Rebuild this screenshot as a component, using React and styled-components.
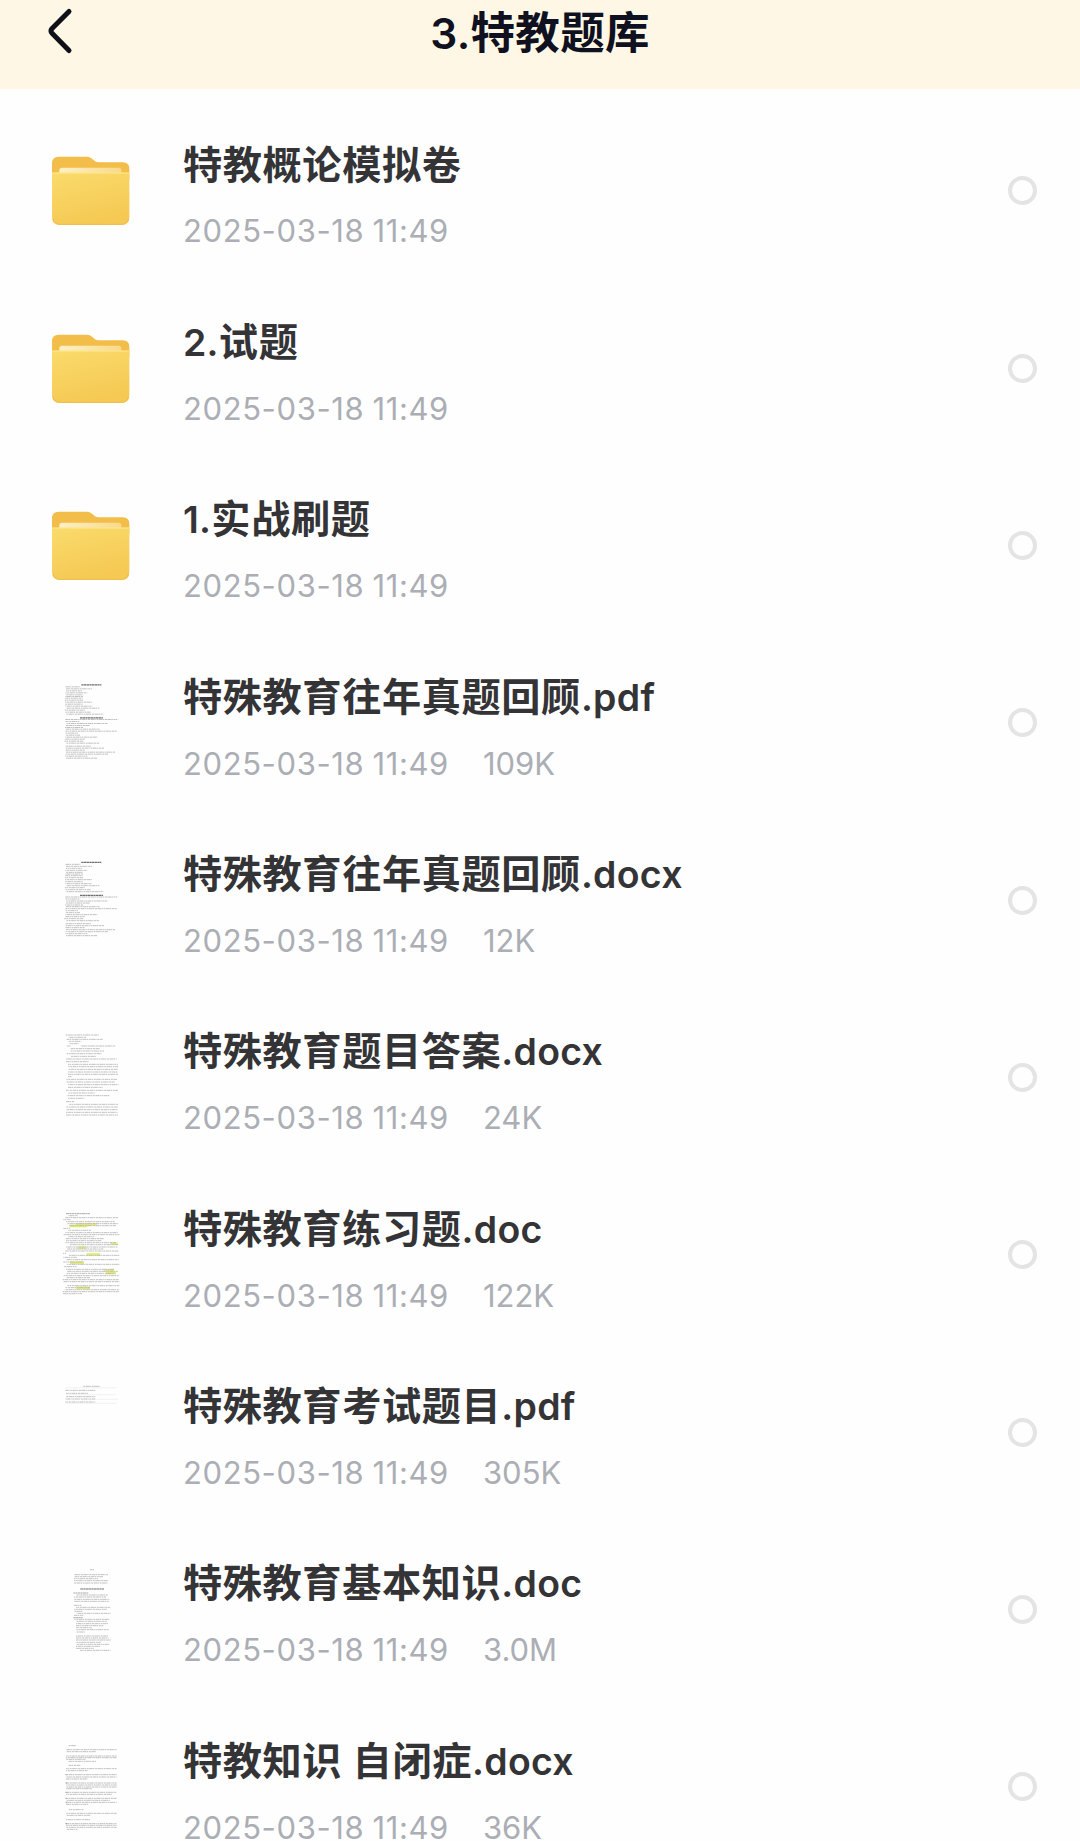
import React from 'react';
import styled, { createGlobalStyle } from 'styled-components';

const GlobalStyle = createGlobalStyle`
  * {
    box-sizing: border-box;
  }

  body {
    margin: 0;
    background: #fefefe;
    font-family: Inter, 'Noto Sans CJK SC', sans-serif;
  }
`;

const StyledPage = styled.div`
  height: 100vh;
  overflow: hidden;
`;

const StyledHeader = styled.header`
  display: grid;
  grid-template-columns: 120px 1fr 120px;
  align-items: start;
  height: 89px;
  background: #fef7e5;
`;

const StyledBack = styled.button`
  display: flex;
  padding: 7px 0 0 46px;
  border: none;
  background: none;
`;

const StyledHeading = styled.h1`
  margin: 0;
  padding-top: 3px;
  font-size: 44.5px;
  font-weight: 600;
  line-height: 60px;
  text-align: center;
  letter-spacing: 0.3px;
  color: #0f1020;
`;

const StyledLatin = styled.span`
  font-size: 0.955em;
  letter-spacing: 0.3px;
`;

const StyledList = styled.ul`
  margin: 0;
  padding: 13px 0 0;
  list-style: none;
`;

const StyledRow = styled.li`
  display: flex;
  align-items: center;
  height: 177.35px;
  padding: 0 43px 0 50px;
`;

const StyledPreview = styled.div`
  display: flex;
  flex: none;
  width: 133px;
  padding-left: ${({ $inset }) => $inset || '0'};
`;

const StyledInfo = styled.div`
  flex: 1;
  display: flex;
  flex-direction: column;
  row-gap: 21px;
  padding-top: 10px;
`;

const StyledName = styled.div`
  font-size: 39.2px;
  font-weight: 600;
  line-height: 50px;
  letter-spacing: 0.6px;
  white-space: pre;
  color: #343436;
`;

const StyledMeta = styled.div`
  display: flex;
  column-gap: 34px;
  font-size: 31px;
  line-height: 40px;
  letter-spacing: 0.6px;
  word-spacing: -1px;
  color: #abaeb4;
`;

const StyledSize = styled.span`
  letter-spacing: 0;
`;

const StyledRadio = styled.span`
  flex: none;
  width: 29px;
  height: 29px;
  border: 4px solid #e4e4e4;
  border-radius: 50%;
`;

// each line: [y, x1, x2, kind]
const DOCS = {
  review: {
    top: 22.5,
    lines: [
      [43, 94, 154, 'title'], [49, 45, 92], [55, 48, 126], [61, 48, 96], [67, 46, 112], [73, 48, 99],
      [78, 46, 100], [83, 46, 98], [89, 45, 99], [95, 45, 126], [101, 45, 99], [107, 46, 126],
      [113, 50, 148], [119, 45, 104], [125, 46, 122], [131, 48, 160],
      [142, 90, 159, 'title'], [147, 46, 202], [153, 46, 88], [159, 48, 172], [165, 46, 120],
      [171, 45, 100], [176, 48, 150], [182, 46, 200], [188, 46, 84], [194, 46, 90], [200, 46, 142],
      [206, 46, 104], [212, 43, 100], [218, 48, 147], [227, 45, 124], [233, 47, 162], [239, 46, 104],
      [245, 48, 196], [251, 46, 174], [257, 46, 112], [263, 48, 142]
    ]
  },
  answers: {
    top: 23,
    lines: [
      [31, 47, 146], [38, 56, 108], [44, 50, 158], [50, 56, 94], [57, 58, 85], [64, 50, 62],
      [64, 92, 196], [72, 62, 150], [79, 62, 162], [87, 50, 154], [95, 62, 138], [103, 48, 200],
      [111, 48, 117], [119, 54, 204], [126, 54, 204], [134, 54, 204], [142, 54, 204], [149, 54, 204],
      [156, 54, 64], [164, 48, 202], [172, 48, 194], [180, 54, 206], [188, 54, 158], [197, 48, 204],
      [205, 54, 134], [213, 50, 180], [221, 54, 104], [231, 48, 74], [239, 58, 204], [247, 48, 204],
      [255, 48, 202], [263, 48, 202], [271, 48, 204]
    ]
  },
  practice: {
    top: 16,
    marks: [[72, 76, 140], [77, 58, 112], [130, 182, 203], [142, 85, 106], [162, 110, 150], [187, 60, 102], [210, 163, 192], [218, 168, 198], [262, 78, 120]],
    lines: [
      [40, 48, 120, 'dark'], [46, 55, 84], [52, 46, 204], [58, 40, 62], [64, 48, 194], [70, 52, 206],
      [76, 58, 198], [84, 40, 60], [90, 55, 124], [97, 46, 204], [103, 40, 208], [109, 55, 132],
      [115, 48, 162], [121, 48, 154], [127, 46, 198], [133, 58, 204], [140, 48, 202], [146, 52, 160],
      [152, 46, 206], [159, 38, 48], [165, 55, 208], [171, 40, 80], [178, 50, 206], [185, 40, 100],
      [192, 50, 208], [199, 40, 80], [207, 48, 192], [213, 52, 204], [219, 50, 194], [226, 40, 206],
      [232, 48, 120], [238, 38, 206], [244, 40, 208], [256, 52, 208], [262, 46, 120], [268, 44, 206],
      [274, 38, 206], [280, 38, 96]
    ]
  },
  exam: {
    top: 9,
    lines: [
      [34, 100, 149], [38, 46, 200, 'faint'], [46, 46, 137], [55, 48, 114], [59, 46, 196, 'faint'],
      [65, 48, 136], [72, 46, 136], [73, 140, 204, 'faint'], [81, 46, 136], [85, 46, 200, 'faint']
    ]
  },
  basics: {
    top: 32,
    lines: [
      [30, 120, 132], [45, 72, 174], [51, 74, 160], [57, 72, 144], [63, 72, 174], [70, 72, 174],
      [88, 90, 162, 'title'], [100, 70, 116, 'dark'], [106, 80, 174], [112, 72, 168], [119, 72, 178],
      [125, 72, 178], [137, 72, 94], [143, 78, 180], [149, 72, 170], [155, 72, 98], [161, 80, 182],
      [167, 72, 100], [174, 70, 98, 'dark'], [179, 72, 178], [185, 78, 170], [192, 78, 174],
      [198, 78, 160], [204, 78, 126], [210, 78, 176], [217, 78, 104], [229, 78, 174], [235, 78, 176],
      [241, 78, 182], [248, 78, 152], [254, 78, 178], [260, 78, 150], [266, 78, 132], [272, 90, 182]
    ]
  },
  autism: {
    top: 25,
    lines: [
      [31, 56, 78], [43, 48, 200], [49, 50, 138], [62, 48, 200], [67, 48, 200], [72, 48, 108],
      [78, 54, 138], [90, 56, 92], [100, 48, 200], [106, 48, 114], [118, 48, 200],
      [125, 48, 200], [131, 48, 112], [143, 48, 200], [149, 48, 200], [155, 48, 200],
      [160, 48, 126], [171, 48, 200], [177, 48, 186], [189, 48, 200], [195, 48, 180],
      [201, 48, 200], [207, 48, 116], [223, 56, 100], [234, 48, 200], [240, 48, 122],
      [253, 48, 120], [265, 48, 200], [270, 48, 200], [276, 48, 200], [282, 48, 84],
      [118, 46, 52, 'dark'], [143, 46, 52, 'dark'], [171, 46, 52, 'dark'], [189, 46, 52, 'dark'],
      [201, 46, 52, 'dark'], [265, 46, 52, 'dark']
    ]
  }
};

const STROKES = {
  title: { stroke: '#707070', strokeWidth: 3.4, strokeDasharray: '7 1' },
  dark: { stroke: '#969696', strokeWidth: 2.4, strokeDasharray: '9 1 5 1' },
  faint: { stroke: '#ececec', strokeWidth: 2 },
  text: { stroke: '#b0b0b0', strokeWidth: 2.4, strokeDasharray: '6 1.5 11 1 4 2' }
};

const files = [
  { name: '特教概论模拟卷' },
  { name: '2.试题' },
  { name: '1.实战刷题' },
  { name: '特殊教育往年真题回顾.pdf', size: '109K', doc: 'review' },
  { name: '特殊教育往年真题回顾.docx', size: '12K', doc: 'review', shift: 1.5 },
  { name: '特殊教育题目答案.docx', size: '24K', doc: 'answers' },
  { name: '特殊教育练习题.doc', size: '122K', doc: 'practice' },
  { name: '特殊教育考试题目.pdf', size: '305K', doc: 'exam' },
  { name: '特殊教育基本知识.doc', size: '3.0M', doc: 'basics' },
  { name: '特教知识 自闭症.docx', size: '36K', doc: 'autism' }
];

// latin runs are set a little smaller than the hanzi around them
const MixedText = ({ text }) => text.split(/([\w.]+)/).filter(Boolean).map((part, i) => (
  /^[\w.]/.test(part) ? <StyledLatin key={i}>{part}</StyledLatin> : part
));

const FolderIcon = () => (
  <svg width="77.4" height="69" viewBox="0 0 232 207">
    <defs>
      <linearGradient id="folderFront" x1="0" y1="0" x2="0.35" y2="1">
        <stop offset="0" stopColor="#fadb6b" />
        <stop offset="1" stopColor="#f5c954" />
      </linearGradient>
      <linearGradient id="folderPaper" x1="0" y1="0" x2="1" y2="0">
        <stop offset="0" stopColor="#fef0c4" />
        <stop offset="1" stopColor="#f9d98a" />
      </linearGradient>
    </defs>
    <path d="M0 70V22Q0 2 20 2H104Q111 2 117 6L129 16Q133 19 140 19H212Q232 19 232 39V70Z" fill="#f3bd49" />
    <path d="M22 62V43Q22 35 30 35H200Q208 35 208 43V62Z" fill="url(#folderPaper)" />
    <path d="M0 50H232V183Q232 207 208 207H24Q0 207 0 183Z" fill="url(#folderFront)" />
    <path d="M1 51H231" stroke="#fde995" strokeWidth="3" />
    <path d="M3 188Q6 205 24 205H208Q226 205 229 188" fill="none" stroke="#eebe4d" strokeWidth="3" />
  </svg>
);

const DocThumb = ({ doc, shift = 0 }) => {
  const { top, marks = [], lines } = DOCS[doc];

  return (
    <svg width="90" height="120" viewBox="0 0 270 360">
      <g transform={`translate(0 ${top + shift})`}>
        {marks.map(([y, x1, x2]) => (
          <path key={`${y}-${x1}`} d={`M${x1} ${y}H${x2}`} stroke="#e6ee7c" strokeWidth="8" />
        ))}
        {lines.map(([y, x1, x2, kind = 'text'], i) => (
          <path
            key={i}
            d={`M${x1} ${y}H${x2}`}
            strokeDashoffset={i * 5}
            {...STROKES[kind]} />
        ))}
      </g>
    </svg>
  );
};

const FileRow = ({ file }) => (
  <StyledRow>
    <StyledPreview $inset={file.doc ? '0' : '2.4px'}>
      {file.doc ? <DocThumb doc={file.doc} shift={file.shift} /> : <FolderIcon />}
    </StyledPreview>
    <StyledInfo>
      <StyledName><MixedText text={file.name} /></StyledName>
      <StyledMeta>
        <span>2025-03-18 11:49</span>
        {file.size && <StyledSize>{file.size}</StyledSize>}
      </StyledMeta>
    </StyledInfo>
    <StyledRadio />
  </StyledRow>
);

const App = () => (
  <StyledPage>
    <GlobalStyle />
    <StyledHeader>
      <StyledBack aria-label="返回">
        <svg width="28" height="48" viewBox="0 0 28 48" fill="none" stroke="#101018" strokeWidth="5" strokeLinecap="round" strokeLinejoin="round">
          <path d="M23 4.5L5.8 21.8Q4.2 24 5.8 26L23 43.5" />
        </svg>
      </StyledBack>
      <StyledHeading><MixedText text="3.特教题库" /></StyledHeading>
    </StyledHeader>
    <StyledList>
      {files.map(file => <FileRow key={file.name} file={file} />)}
    </StyledList>
  </StyledPage>
);

export default App;
